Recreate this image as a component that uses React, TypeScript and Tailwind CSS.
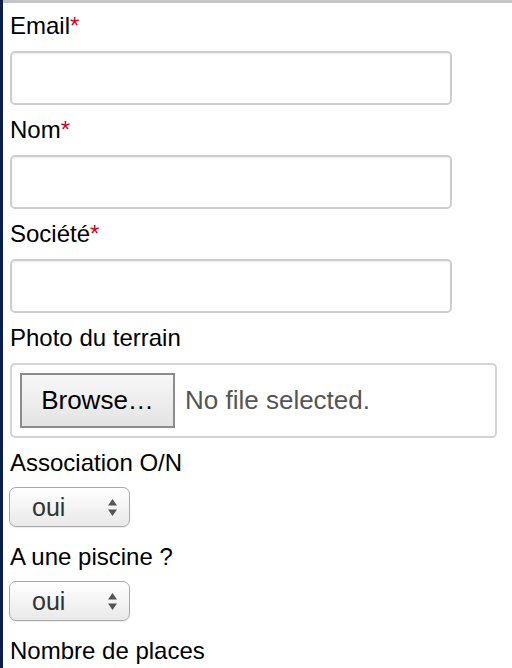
import type { ReactNode } from "react";

const font = { fontFamily: '"Liberation Sans", Arial, Helvetica, sans-serif' };

function Label({ children, required }: { children: ReactNode; required?: boolean }) {
  return (
    <label className="mt-[11px] block text-[24px] leading-[28px] text-black">
      {children}
      {required && <span className="text-[#d0021b]">*</span>}
    </label>
  );
}

function TextInput() {
  return (
    <input
      type="text"
      className="mt-[11px] block h-[54px] w-[442px] rounded-[5px] border-2 border-[#cdcdcd] bg-white px-3 text-[24px] shadow-[inset_0_1px_2px_rgba(0,0,0,0.08)] outline-none"
    />
  );
}

function SelectBox() {
  return (
    <div className="relative mt-[10px] mb-[16px] h-[40px] w-[121px] -ml-px">
      <select
        defaultValue="oui"
        className="h-full w-full appearance-none rounded-[7px] border border-[#a9a9a9] bg-gradient-to-b from-white to-[#e9e9e9] pl-[22px] text-[25px] leading-[38px] text-[#333] shadow-[0_1px_1px_rgba(0,0,0,0.08)] outline-none"
      >
        <option value="oui">oui</option>
        <option value="non">non</option>
      </select>
      <svg
        className="pointer-events-none absolute right-[13px] top-[12px]"
        width="9"
        height="17"
        viewBox="0 0 9 17"
      >
        <path d="M4.5 0 L9 6.5 L0 6.5 Z" fill="#555" />
        <path d="M0 10.5 L9 10.5 L4.5 17 Z" fill="#555" />
      </svg>
    </div>
  );
}

export default function App() {
  return (
    <div className="flex min-h-screen bg-white" style={font}>
      <div className="w-[3px] shrink-0 bg-[#0b1f4d]" />
      <div className="flex-1">
        <div className="h-[3px] bg-[#c4c4c4]" />
        <form className="-mt-[2px] pl-[7px]">
          <Label required>Email</Label>
          <TextInput />

          <Label required>Nom</Label>
          <TextInput />

          <Label required>Société</Label>
          <TextInput />

          <Label>Photo du terrain</Label>
          <div className="mt-[11px] flex h-[75px] w-[487px] items-center rounded-[5px] border-2 border-[#d3d3d3] bg-white pl-[8px]">
            <button
              type="button"
              className="flex h-[55px] w-[155px] items-center justify-center border-2 border-[#8c8c8c] bg-gradient-to-b from-[#f7f7f7] to-[#e4e4e4] text-[26px] text-black"
            >
              Browse…
            </button>
            <span className="ml-[10px] text-[26px] text-[#555]">No file selected.</span>
          </div>

          <Label>Association O/N</Label>
          <SelectBox />

          <Label>A une piscine ?</Label>
          <SelectBox />

          <Label>Nombre de places</Label>
        </form>
      </div>
    </div>
  );
}
